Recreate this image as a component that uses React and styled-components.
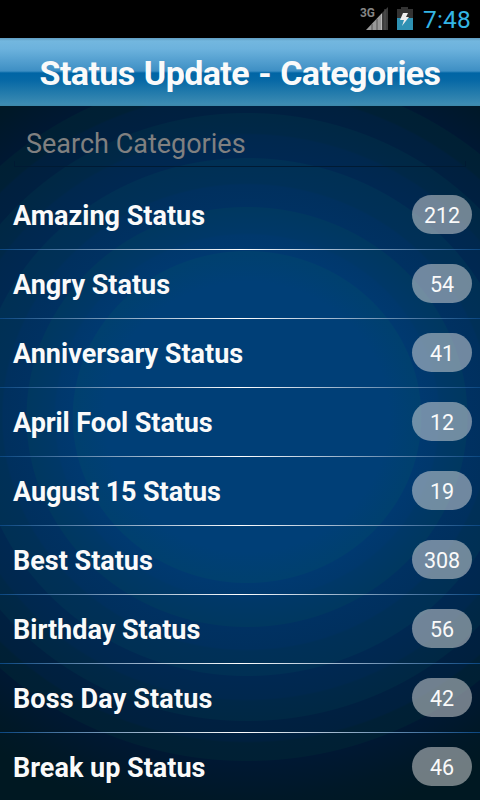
import React from "react";
import styled, { createGlobalStyle } from "styled-components";

const Global = createGlobalStyle`
  * { box-sizing: border-box; }
  body { margin: 0; background: #000; font-family: Roboto, sans-serif; }
`;

const Screen = styled.main`
  width: 480px;
  height: 800px;
  overflow: hidden;
  display: flex;
  flex-direction: column;
`;

const StatusBar = styled.div`
  height: 38px;
  flex: none;
  background: #000;
  display: flex;
  justify-content: flex-end;
  align-items: flex-start;
  padding-right: 9px;
`;

const Clock = styled.time`
  color: #33b5e5;
  font-size: 24.5px;
  line-height: 39px;
  letter-spacing: 0.2px;
  margin-left: 7px;
  white-space: nowrap;
`;

const Header = styled.header`
  height: 68px;
  flex: none;
  display: flex;
  align-items: center;
  justify-content: center;
  padding-top: 2px;
  background: linear-gradient(#5f9cc0 0, #73b7df 3px, #6cb2dd 11px, #3e8fc4 33px, #0065a5 35px, #0668a5 42px, #3c8bb2 66px, #3c87a9 68px);
`;

const Title = styled.h1`
  margin: 0;
  color: #fafafa;
  font-size: 34px;
  line-height: 40px;
  font-weight: 700;
  letter-spacing: -0.59px;
  word-spacing: 1.3px;
  white-space: nowrap;
`;

const Content = styled.section`
  flex: 1;
  min-height: 0;
  overflow: hidden;
  background: radial-gradient(
    ellipse 525px 500px at 247px 311px,
    #003f77 27%, #00406e 33.1%,
    #003970 33.3%, #00386c 36.4%,
    #003868 36.8%, #003860 41.9%,
    #003162 42.1%, #00305e 46.4%,
    #003058 46.8%, #003054 51.7%,
    #002852 51.9%, #00284e 56.4%,
    #002848 56.8%, #002844 60.7%,
    #002041 60.9%, #00203e 64.8%,
    #002036 65.2%, #002034 68.7%,
    #001833 68.9%, #00182c 73.6%,
    #001828 76%, #001822 82%
  );
`;

const SearchBox = styled.div`
  height: 61px;
  margin: 0 14px;
  padding: 16px 12px 0;
  background:
    linear-gradient(#001a33, #001a33) left bottom / 1px 6px no-repeat,
    linear-gradient(#001a33, #001a33) right bottom / 1px 6px no-repeat,
    linear-gradient(#001a33, #001a33) left bottom / 100% 1px no-repeat;
`;

const SearchInput = styled.input`
  display: block;
  width: 100%;
  height: 44px;
  padding: 0;
  border: 0;
  outline: 0;
  background: transparent;
  color: #fff;
  font: 27px/44px Roboto, sans-serif;
  &::placeholder { color: #808080; opacity: 1; }
`;

const List = styled.ul`
  list-style: none;
  margin: 14px 0 0;
  padding: 0;
`;

const Row = styled.li`
  height: 69px;
  display: flex;
  align-items: center;
  justify-content: space-between;
  padding: 0 8px 0 13px;
  border-bottom: 1px solid;
  border-image: linear-gradient(90deg, #0a4680, #fff 50%, #0a4680) 1;
`;

const Label = styled.span`
  color: #fafafa;
  font-size: 27px;
  font-weight: 700;
  line-height: 36px;
  padding-top: 2px;
  letter-spacing: ${({ $tracking }) => $tracking || 0}px;
  white-space: nowrap;
`;

const Badge = styled.span`
  width: 60px;
  height: 39px;
  margin-bottom: 2px;
  border-radius: 20px;
  background: rgba(224, 224, 224, 0.5);
  color: #fafafa;
  font-size: 21.5px;
  line-height: 41px;
  text-align: center;
`;

const SignalIcon = () => (
  <svg width="31" height="38" viewBox="0 0 31 38">
    <text x="0" y="17" fill="#858585" fontFamily="Roboto" fontWeight="700" fontSize="12.5" textLength="15" lengthAdjust="spacingAndGlyphs">3G</text>
    <path d="M28 7V30H22V13Z" fill="#3c3c3c" />
    <path d="M6 30L22 13V30Z" fill="#999" />
    <path d="M12 24V30M17 19V30M25 9V30" stroke="#555" />
    <path d="M21.5 14V30" stroke="#bbb" />
  </svg>
);

const BatteryIcon = () => (
  <svg width="25" height="38" viewBox="0 0 25 38">
    <path d="M6 9H10V7H17V9H22V30H6Z" fill="#333" />
    <path d="M6 18H22V30H6Z" fill="#2e91b3" />
    <path d="M12 13H17L15 17H18L11 26L13 20H9Z" fill="#eee" />
  </svg>
);

const categories = [
  { name: "Amazing Status", count: 212 },
  { name: "Angry Status", count: 54 },
  { name: "Anniversary Status", count: 41 },
  { name: "April Fool Status", count: 12, tracking: -0.08 },
  { name: "August 15 Status", count: 19, tracking: -0.1 },
  { name: "Best Status", count: 308 },
  { name: "Birthday Status", count: 56 },
  { name: "Boss Day Status", count: 42, tracking: 0.14 },
  { name: "Break up Status", count: 46 },
];

export default function App() {
  return (
    <Screen>
      <Global />
      <StatusBar>
        <SignalIcon />
        <BatteryIcon />
        <Clock>7:48</Clock>
      </StatusBar>
      <Header>
        <Title>Status Update - Categories</Title>
      </Header>
      <Content>
        <SearchBox>
          <SearchInput placeholder="Search Categories" />
        </SearchBox>
        <List>
          {categories.map(({ name, count, tracking }) => (
            <Row key={name}>
              <Label $tracking={tracking}>{name}</Label>
              <Badge>{count}</Badge>
            </Row>
          ))}
        </List>
      </Content>
    </Screen>
  );
}
